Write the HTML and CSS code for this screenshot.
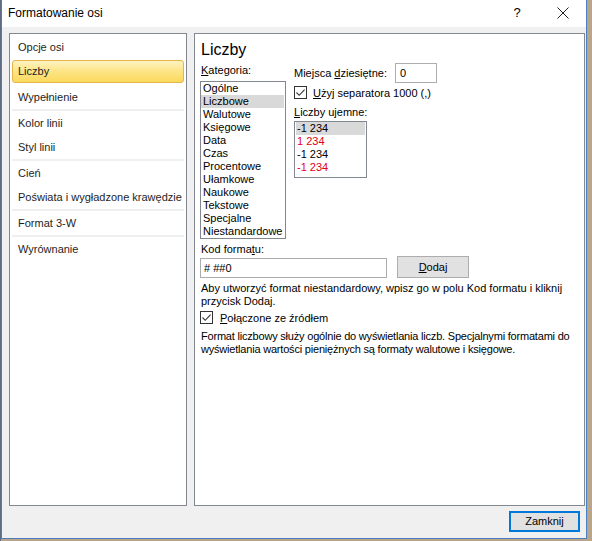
FILE: index.html
```html
<!DOCTYPE html>
<html lang="pl">
<head>
<meta charset="utf-8">
<title>Formatowanie osi</title>
<link rel="stylesheet" href="styles.css">
</head>
<body>
<div class="window">
  <div class="titlebar">
    <span class="title">Formatowanie osi</span>
    <span class="help">?</span>
    <span class="close">
      <svg width="12" height="12" viewBox="0 0 12 12"><path d="M0.5 0.5 L11.5 11.5 M11.5 0.5 L0.5 11.5" stroke="#222" stroke-width="1" fill="none"/></svg>
    </span>
  </div>
  <div class="content">
    <div class="panels">
      <div class="nav">
        <div class="nav-item">Opcje osi</div>
        <div class="nav-item active">Liczby</div>
        <div class="nav-item">Wypełnienie</div>
        <div class="sep"></div>
        <div class="nav-item">Kolor linii</div>
        <div class="nav-item">Styl linii</div>
        <div class="sep"></div>
        <div class="nav-item">Cień</div>
        <div class="nav-item">Poświata i wygładzone krawędzie</div>
        <div class="sep"></div>
        <div class="nav-item">Format 3-W</div>
        <div class="sep"></div>
        <div class="nav-item">Wyrównanie</div>
      </div>
      <div class="main">
        <div class="heading">Liczby</div>
        <div class="cols">
          <div class="cat-col">
            <div class="label cat-label"><u>K</u>ategoria:</div>
            <div class="listbox cat-list">
              <div class="li">Ogólne</div>
              <div class="li sel">Liczbowe</div>
              <div class="li">Walutowe</div>
              <div class="li">Księgowe</div>
              <div class="li">Data</div>
              <div class="li">Czas</div>
              <div class="li">Procentowe</div>
              <div class="li">Ułamkowe</div>
              <div class="li">Naukowe</div>
              <div class="li">Tekstowe</div>
              <div class="li">Specjalne</div>
              <div class="li">Niestandardowe</div>
            </div>
          </div>
          <div class="opt-col">
            <div class="row-dec">
              <span class="label dec-label">Miejsca <u>d</u>ziesiętne:</span>
              <span class="input small">0</span>
            </div>
            <div class="check-row sep-row">
              <span class="checkbox"><svg width="13" height="13" viewBox="0 0 13 13"><path d="M2.5 6.5 L5.2 9.3 L10.6 3.6" stroke="#333" stroke-width="1.1" fill="none"/></svg></span>
              <span><u>U</u>żyj separatora 1000 (,)</span>
            </div>
            <div class="label neg-label"><u>L</u>iczby ujemne:</div>
            <div class="listbox neg-list">
              <div class="li sel">-1 234</div>
              <div class="li red">1 234</div>
              <div class="li">-1 234</div>
              <div class="li red">-1 234</div>
            </div>
          </div>
        </div>
        <div class="label code-label">Kod forma<u>t</u>u:</div>
        <div class="code-row">
          <span class="input wide"># ##0</span>
          <span class="button"><u>D</u>odaj</span>
        </div>
        <p class="para para-first">Aby utworzyć format niestandardowy, wpisz go w polu Kod formatu i kliknij przycisk Dodaj.</p>
        <div class="check-row linked">
          <span class="checkbox"><svg width="13" height="13" viewBox="0 0 13 13"><path d="M2.5 6.5 L5.2 9.3 L10.6 3.6" stroke="#333" stroke-width="1.1" fill="none"/></svg></span>
          <span><u>P</u>ołączone ze źródłem</span>
        </div>
        <p class="para para-second">Format liczbowy służy ogólnie do wyświetlania liczb. Specjalnymi formatami do wyświetlania wartości pieniężnych są formaty walutowe i księgowe.</p>
      </div>
    </div>
    <div class="footer">
      <span class="close-btn">Zamknij</span>
    </div>
  </div>
</div>
</body>
</html>
```

FILE: styles.css
```css
html, body {
  margin: 0;
  padding: 0;
}
* {
  box-sizing: border-box;
}
body {
  width: 592px;
  height: 541px;
  background: linear-gradient(to right, #5d6b84 0, #5d6b84 1px, #b9a58a 1px);
  font-family: "Liberation Sans", Arial, sans-serif;
  font-size: 11px;
  color: #000;
  overflow: hidden;
}
.window {
  margin-left: 1px;
  width: 586px;
  height: 539px;
  border: 1px solid #4a7fc0;
  border-top: 0;
  background: #f0f0f0;
  display: flex;
  flex-direction: column;
}
.titlebar {
  height: 27px;
  flex: none;
  background: #fff;
  display: flex;
  align-items: center;
  padding-left: 6px;
}
.title {
  font-size: 12px;
  flex: 1;
  padding-bottom: 2px;
}
.help {
  font-size: 13px;
  width: 46px;
  text-align: center;
  padding-bottom: 2px;
}
.close {
  width: 46px;
  display: flex;
  justify-content: center;
  padding-bottom: 2px;
}
.content {
  flex: 1;
  display: flex;
  flex-direction: column;
  padding: 6px 1px 0 7px;
}
.panels {
  display: flex;
  gap: 7px;
  height: 473px;
  flex: none;
}
.nav {
  width: 178px;
  background: #fff;
  border: 1px solid #828790;
  padding: 1px 2px 0 2px;
  display: flex;
  flex-direction: column;
}
.nav-item {
  height: 24px;
  line-height: 24px;
  padding-left: 6px;
  color: #1e1e1e;
  flex: none;
}
.nav-item.active {
  background: linear-gradient(to bottom, #fdf3c2 0%, #fde68a 45%, #fbd95c 100%);
  border: 1px solid #e3b54b;
  border-radius: 3px;
  height: 23px;
  line-height: 21px;
  padding-left: 5px;
  margin: 1px 0 2px 0;
}
.sep {
  height: 2px;
  flex: none;
  background: #efefef;
}
.main {
  width: 391px;
  background: #fff;
  border: 1px solid #828790;
  padding: 5px 0 0 5px;
}
.heading {
  font-size: 16px;
  line-height: 22px;
  padding-left: 1px;
}
.cols {
  display: flex;
  gap: 8px;
}
.label {
  line-height: 13px;
}
.cat-col {
  width: 86px;
}
.cat-label {
  margin-top: 3px;
  margin-bottom: 4px;
  padding-left: 1px;
}
.listbox {
  border: 1px solid #828790;
  background: #fff;
}
.cat-list {
  width: 86px;
  height: 158px;
}
.li {
  line-height: 13px;
  height: 13px;
  padding-left: 2px;
}
.cat-list .li.sel {
  margin-right: 1px;
}
.li.sel {
  background: #d9d9d9;
}
.li.red {
  color: #e0001b;
}
.opt-col {
  padding-top: 2px;
}
.row-dec {
  display: flex;
  align-items: center;
}
.dec-label {
  width: 101px;
}
.input {
  display: inline-block;
  border: 1px solid #adadad;
  background: #fff;
  height: 20px;
  line-height: 18px;
  padding-left: 4px;
}
.input.small {
  width: 42px;
}
.check-row {
  display: flex;
  align-items: center;
  gap: 6px;
  height: 13px;
}
.sep-row {
  margin-top: 3px;
}
.checkbox {
  width: 13px;
  height: 13px;
  border: 1px solid #333;
  display: flex;
  background: #fff;
  flex: none;
}
.checkbox svg {
  margin: -1px;
}
.neg-label {
  margin-top: 7px;
  margin-bottom: 2px;
}
.neg-list {
  width: 73px;
  height: 57px;
  padding: 0 0 0 1px;
}
.neg-list .li {
  padding-left: 1px;
  margin-right: 1px;
}
.code-label {
  margin-top: 4px;
  padding-left: 1px;
}
.code-row {
  display: flex;
  align-items: flex-end;
  gap: 10px;
}
.input.wide {
  width: 187px;
  padding-left: 3px;
}
.button {
  width: 72px;
  height: 22px;
  background: #e1e1e1;
  border: 1px solid #adadad;
  text-align: center;
  line-height: 20px;
}
.para {
  margin: 0;
  line-height: 13px;
  width: 382px;
  padding-left: 1px;
}
.para-first {
  margin-top: 4px;
}
.linked {
  margin-top: 3px;
  gap: 7px;
}
.para-second {
  margin-top: 6px;
  letter-spacing: -0.2px;
}
.footer {
  display: flex;
  justify-content: flex-end;
  padding: 5px 5px 0 0;
}
.close-btn {
  width: 71px;
  height: 21px;
  border: 2px solid #0078d7;
  background: #e1e1e1;
  text-align: center;
  line-height: 17px;
}
```
